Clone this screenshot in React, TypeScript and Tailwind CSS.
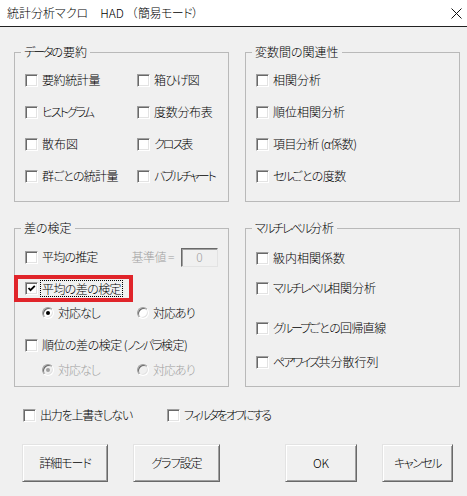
import React from "react";

function K({ children, t = "tracking-[-2px]" }: { children: React.ReactNode; t?: string }) {
  return <span className={t}>{children}</span>;
}

function Box({ checked = false }: { checked?: boolean }) {
  return (
    <span className="relative inline-flex w-[13px] h-[13px] shrink-0 bg-white border border-t-[#a0a0a0] border-l-[#a0a0a0] border-b-[#ffffff] border-r-[#ffffff] shadow-[inset_1px_1px_0_#696969,inset_-1px_-1px_0_#e3e3e3]">
      {checked && (
        <svg className="absolute left-[1px] top-[1px]" width="9" height="9" viewBox="0 0 9 9">
          <path d="M1.5 4 L3.5 6.2 L7.8 1.8" fill="none" stroke="#000" strokeWidth="1.8" />
        </svg>
      )}
    </span>
  );
}

function Check({ label, checked = false, focus = false, t = "" }: { label: React.ReactNode; checked?: boolean; focus?: boolean; t?: string }) {
  return (
    <div className="flex items-center h-[20px]">
      <Box checked={checked} />
      {focus ? (
        <span className={"ml-[2px] px-[1px] border border-dotted border-black leading-[15px] whitespace-nowrap " + t}>{label}</span>
      ) : (
        <span className={"ml-[4px] whitespace-nowrap " + t}>{label}</span>
      )}
    </div>
  );
}

function Radio({ label, checked = false, disabled = false }: { label: string; checked?: boolean; disabled?: boolean }) {
  return (
    <div className="flex items-center h-[20px]">
      <span
        className={
          "relative inline-flex items-center justify-center w-[12px] h-[12px] rounded-full shrink-0 border border-t-[#a0a0a0] border-l-[#a0a0a0] border-b-[#ffffff] border-r-[#ffffff] shadow-[inset_1px_1px_0_#696969,inset_-1px_-1px_0_#e3e3e3] " +
          (disabled ? "bg-[#f0f0f0]" : "bg-white")
        }
      >
        {checked && (
          <span className={"w-[4px] h-[4px] rounded-full " + (disabled ? "bg-[#a0a0a0]" : "bg-black")} />
        )}
      </span>
      <span className={"ml-[4px] whitespace-nowrap tracking-[-1px] " + (disabled ? "text-[#a0a0a0]" : "")}>{label}</span>
    </div>
  );
}

function Group({ title, className, children }: { title: React.ReactNode; className: string; children: React.ReactNode }) {
  return (
    <fieldset className={"border border-[#b9b9b9] p-0 m-0 min-w-0 " + className}>
      <legend className="ml-[6px] px-[3px] leading-[16px] whitespace-nowrap">{title}</legend>
      {children}
    </fieldset>
  );
}

function Btn({ label, className }: { label: string; className: string }) {
  return (
    <div
      className={
        "h-[38px] flex items-center justify-center bg-[#f0f0f0] border border-t-[#e3e3e3] border-l-[#e3e3e3] border-b-[#696969] border-r-[#696969] shadow-[inset_1px_1px_0_#ffffff,inset_-1px_-1px_0_#a0a0a0] " +
        className
      }
    >
      {label}
    </div>
  );
}

export default function App() {
  return (
    <div className="w-[467px] h-[496px] overflow-hidden bg-[#f0f0f0] text-black text-[12px] leading-[16px] font-light font-['Noto_Sans_CJK_JP',sans-serif] [font-feature-settings:'palt']">
      {/* title bar */}
      <div className="h-[27px] bg-white border-b border-[#222] flex items-center justify-between pl-[7px] pr-[4px]">
        <span className="whitespace-nowrap flex items-center">
          <span>統計分析マクロ</span>
          <span className="ml-[12px]">HAD</span>
          <span className="ml-[2px] [font-feature-settings:normal]">（</span>
          <span className="tracking-[-0.5px]">簡易モード</span>
          <span>）</span>
        </span>
        <svg width="11" height="11" viewBox="0 0 11 11" className="mr-[1px]">
          <path d="M0.5 0.5 L10.5 10.5 M10.5 0.5 L0.5 10.5" stroke="#111" strokeWidth="1" />
        </svg>
      </div>

      <div className="pl-[14px] pr-[7px] pt-[17px]">
        <div className="grid grid-cols-[215px_215px] gap-x-[16px] gap-y-[18px]">
          <Group title={<><K>データ</K>の要約</>} className="h-[158px]">
            <div className="pt-[10px] px-[10px] grid grid-cols-[112px_1fr] gap-y-[12px]">
              <Check label="要約統計量" t="tracking-[-0.4px]" />
              <Check label="箱ひげ図" t="tracking-[-0.5px]" />
              <Check label="ヒストグラム" t="tracking-[-2px]" />
              <Check label="度数分布表" t="tracking-[-0.3px]" />
              <Check label="散布図" />
              <Check label={<><K>クロス</K>表</>} />
              <Check label="群ごとの統計量" t="tracking-[-0.7px]" />
              <Check label="バブルチャート" t="tracking-[-2px]" />
            </div>
          </Group>

          <Group title="変数間の関連性" className="h-[158px]">
            <div className="pt-[10px] px-[10px] flex flex-col gap-y-[12px]">
              <Check label="相関分析" />
              <Check label="順位相関分析" />
              <Check label="項目分析 (α係数)" t="tracking-[-0.6px]" />
              <Check label={<><K>セル</K>ごとの度数</>} t="tracking-[-0.5px]" />
            </div>
          </Group>

          <Group title="差の検定" className="h-[167px]">
            <div className="pt-[11px] pl-[10px] pr-[10px] flex flex-col">
              <div className="flex items-center justify-between h-[20px]">
                <Check label="平均の推定" t="tracking-[-0.8px]" />
                <div className="flex items-center">
                  <span className="text-[#a0a0a0] whitespace-nowrap tracking-[-0.5px]">基準値 =</span>
                  <div className="ml-[7px] w-[37px] h-[19px] bg-[#f0f0f0] border border-t-[#696969] border-l-[#696969] border-b-[#e3e3e3] border-r-[#e3e3e3] shadow-[inset_1px_1px_0_#a0a0a0] flex items-center justify-center text-[#a0a0a0] leading-[14px]">
                    0
                  </div>
                </div>
              </div>
              <div className="relative mt-[11px]">
                <Check label="平均の差の検定" t="tracking-[-0.6px]" checked focus />
                <div className="absolute left-[-11px] top-[-3px] w-[119px] h-[27px] border-[4px] border-[#e0242a] pointer-events-none" />
              </div>
              <div className="mt-[5px] flex">
                <div className="w-[112px] pl-[17px]">
                  <Radio label="対応なし" checked />
                </div>
                <Radio label="対応あり" />
              </div>
              <div className="mt-[12px]">
                <Check label={<>順位の差の検定 (<K>ノンパラ</K>検定)</>} t="tracking-[-0.5px]" />
              </div>
              <div className="mt-[5px] flex">
                <div className="w-[112px] pl-[17px]">
                  <Radio label="対応なし" checked disabled />
                </div>
                <Radio label="対応あり" disabled />
              </div>
            </div>
          </Group>

          <Group title={<><K>マルチレベル</K>分析</>} className="h-[167px]">
            <div className="pt-[12px] px-[10px] flex flex-col">
              <Check label="級内相関係数" />
              <div className="mt-[10px]">
                <Check label={<><K>マルチレベル</K>相関分析</>} />
              </div>
              <div className="mt-[20px]">
                <Check label={<><K>グループ</K>ごとの回帰直線</>} t="tracking-[-0.6px]" />
              </div>
              <div className="mt-[14px]">
                <Check label={<><K>ペアワイズ</K>共分散行列</>} />
              </div>
            </div>
          </Group>
        </div>

        <div className="mt-[18px] flex items-center">
          <div className="ml-[9px] w-[144px]">
            <Check label="出力を上書きしない" t="tracking-[-1.2px]" />
          </div>
          <Check label="フィルタをオフにする" t="tracking-[-2px]" />
        </div>

        <div className="mt-[19px] flex">
          <Btn label="詳細モード" className="ml-[8px] w-[86px] tracking-[-1px]" />
          <Btn label="グラフ設定" className="ml-[25px] w-[87px] tracking-[-1px]" />
          <Btn label="OK" className="ml-[65px] w-[72px]" />
          <Btn label="キャンセル" className="ml-[25px] w-[71px] tracking-[-1.5px]" />
        </div>
      </div>
    </div>
  );
}
